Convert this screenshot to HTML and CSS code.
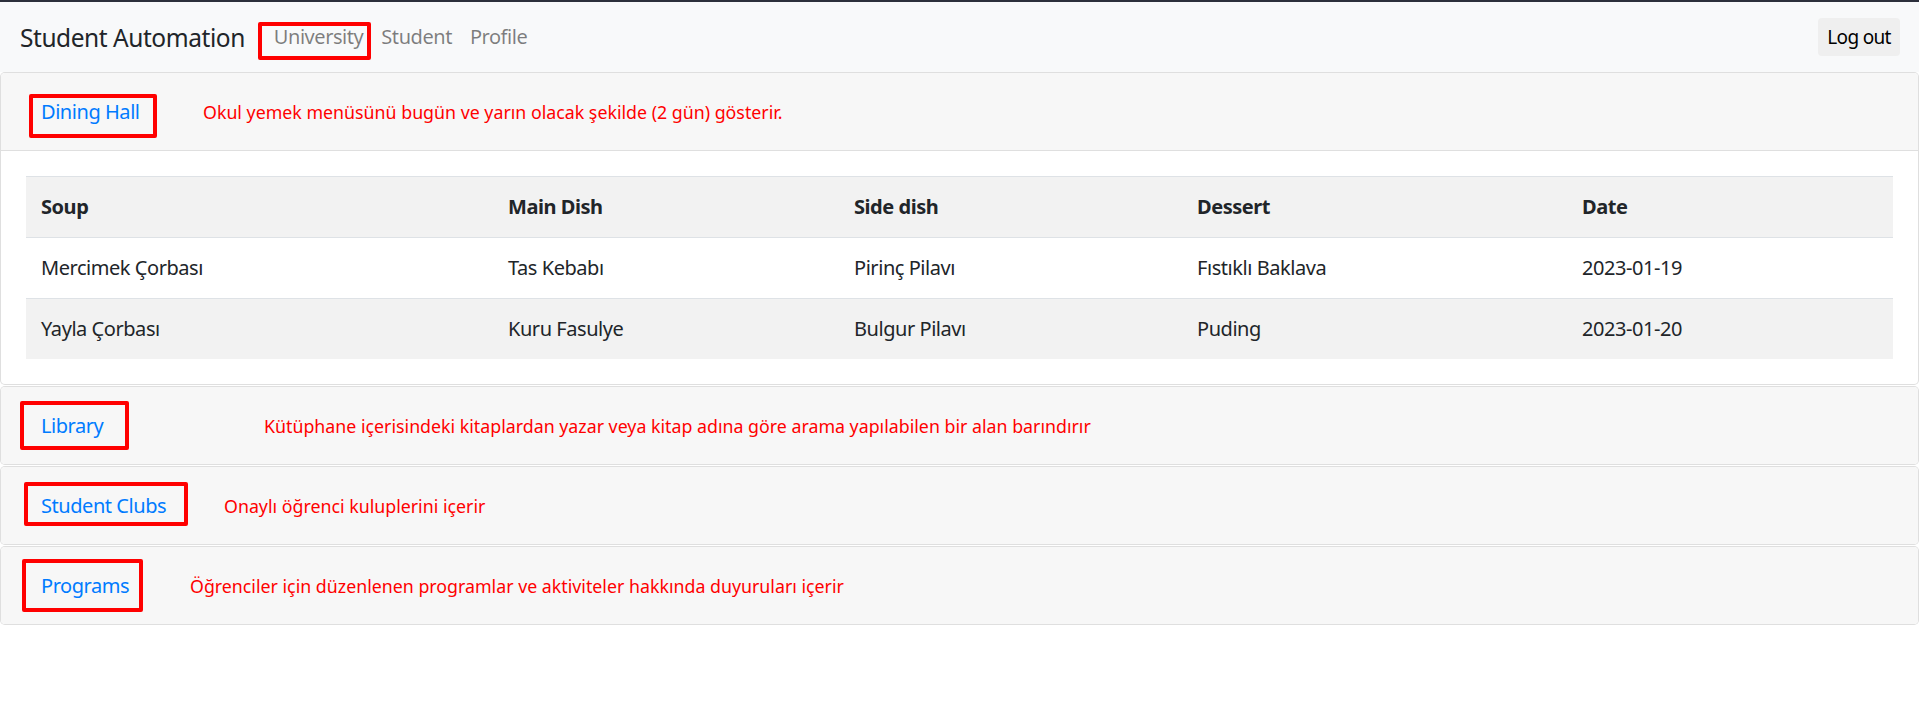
FILE: index.html
```html
<!DOCTYPE html>
<html lang="tr">
<head>
<meta charset="utf-8">
<title>Student Automation</title>
<link rel="stylesheet" href="styles.css">
</head>
<body>
<div class="topline"></div>
<nav class="navbar">
  <a class="brand" href="#">Student Automation</a>
  <ul class="nav">
    <li class="nav-item"><a class="nav-link" href="#">University</a><span class="mark mark-univ"></span></li>
    <li class="nav-item"><a class="nav-link" href="#">Student</a></li>
    <li class="nav-item"><a class="nav-link" href="#">Profile</a></li>
  </ul>
  <button class="logout" type="button">Log out</button>
</nav>

<div class="accordion">
  <div class="card">
    <div class="card-header">
      <button class="btn-link" type="button">Dining Hall</button>
      <span class="note note-dining">Okul yemek menüsünü bugün ve yarın olacak şekilde (2 gün) gösterir.</span>
      <span class="mark mark-dining"></span>
    </div>
    <div class="card-body">
      <table class="table">
        <colgroup>
          <col class="c1"><col class="c2"><col class="c3"><col class="c4"><col class="c5">
        </colgroup>
        <thead>
          <tr><th>Soup</th><th>Main Dish</th><th>Side dish</th><th>Dessert</th><th>Date</th></tr>
        </thead>
        <tbody>
          <tr><td>Mercimek Çorbası</td><td>Tas Kebabı</td><td>Pirinç Pilavı</td><td>Fıstıklı Baklava</td><td>2023-01-19</td></tr>
          <tr class="striped"><td>Yayla Çorbası</td><td>Kuru Fasulye</td><td>Bulgur Pilavı</td><td>Puding</td><td>2023-01-20</td></tr>
        </tbody>
      </table>
    </div>
  </div>

  <div class="card">
    <div class="card-header">
      <button class="btn-link" type="button">Library</button>
      <span class="note note-library">Kütüphane içerisindeki kitaplardan yazar veya kitap adına göre arama yapılabilen bir alan barındırır</span>
      <span class="mark mark-library"></span>
    </div>
  </div>

  <div class="card">
    <div class="card-header">
      <button class="btn-link" type="button">Student Clubs</button>
      <span class="note note-clubs">Onaylı öğrenci kuluplerini içerir</span>
      <span class="mark mark-clubs"></span>
    </div>
  </div>

  <div class="card">
    <div class="card-header">
      <button class="btn-link" type="button">Programs</button>
      <span class="note note-programs">Öğrenciler için düzenlenen programlar ve aktiviteler hakkında duyuruları içerir</span>
      <span class="mark mark-programs"></span>
    </div>
  </div>
</div>
</body>
</html>
```

FILE: styles.css
```css
* { box-sizing: border-box; }

html, body {
  margin: 0;
  padding: 0;
  background: #ffffff;
  font-family: "Noto Sans", "Open Sans", sans-serif;
  font-size: 20px;
  line-height: 30px;
  color: #212529;
}

.topline {
  height: 2px;
  background: #2c2f3b;
}

.navbar {
  display: flex;
  align-items: center;
  height: 70px;
  padding: 0 19px 0 20px;
  background: #f8f9fa;
}

.brand {
  font-size: 24.5px;
  line-height: 37px;
  color: #212529;
  text-decoration: none;
  margin-right: 20px;
  letter-spacing: -0.45px;
}

.nav {
  display: flex;
  list-style: none;
  margin: 0;
  padding: 0;
}

.nav-item { position: relative; }

.nav-link {
  display: block;
  padding: 10px 9px;
  color: rgba(0, 0, 0, 0.5);
  text-decoration: none;
  letter-spacing: -0.45px;
}

.logout {
  margin-left: auto;
  width: 82px;
  height: 38px;
  border: 0;
  border-radius: 4px;
  background: #efefef;
  color: #000;
  font-family: inherit;
  font-size: 19px;
  letter-spacing: -0.7px;
  padding: 0;
}

.accordion { padding: 0; }

.card {
  border: 1px solid rgba(0, 0, 0, 0.125);
  border-radius: 5px;
  background: #fff;
  margin-bottom: 1px;
  overflow: hidden;
}

.card-header {
  position: relative;
  display: flex;
  align-items: center;
  height: 77px;
  padding: 0 25px;
  background: #f7f7f7;
}

.card-body {
  border-top: 1px solid rgba(0, 0, 0, 0.125);
  padding: 25px 25px 25px;
}

.btn-link {
  background: none;
  border: 0;
  padding: 7px 15px;
  color: #007bff;
  font-family: inherit;
  font-size: 20px;
  line-height: 30px;
  letter-spacing: -0.45px;
  cursor: pointer;
}

.note {
  position: absolute;
  top: 50%;
  transform: translateY(-50%);
  color: #ff0000;
  font-size: 17.8px;
  line-height: 22px;
  letter-spacing: 0;
  white-space: nowrap;
}

.note-dining { left: 202px; }
.note-library { left: 263px; }
.note-clubs { left: 223px; }
.note-programs { left: 189px; }

.mark {
  position: absolute;
  border: 4px solid #ff0000;
  border-radius: 2px;
  pointer-events: none;
}

.mark-univ { left: -7px; top: 10px; width: 113px; height: 38px; }
.mark-dining { left: 28px; top: 21px; width: 128px; height: 44px; }
.mark-library { left: 19px; top: 14px; width: 109px; height: 49px; }
.mark-clubs { left: 23px; top: 15px; width: 164px; height: 44px; }
.mark-programs { left: 21px; top: 12px; width: 121px; height: 53px; }

.table {
  width: 100%;
  border-collapse: collapse;
  table-layout: fixed;
}

.c1 { width: 467px; }
.c2 { width: 346px; }
.c3 { width: 343px; }
.c4 { width: 385px; }
.c5 { width: 326px; }

.table th,
.table td {
  text-align: left;
  padding: 15px 15px;
  border-top: 1px solid #dee2e6;
  line-height: 30px;
  letter-spacing: -0.45px;
  white-space: nowrap;
}

.table th {
  font-weight: 700;
  background: #f2f2f2;
  border-bottom: 1px solid #dee2e6;
}

.table tr.striped td { background: #f2f2f2; }
```
